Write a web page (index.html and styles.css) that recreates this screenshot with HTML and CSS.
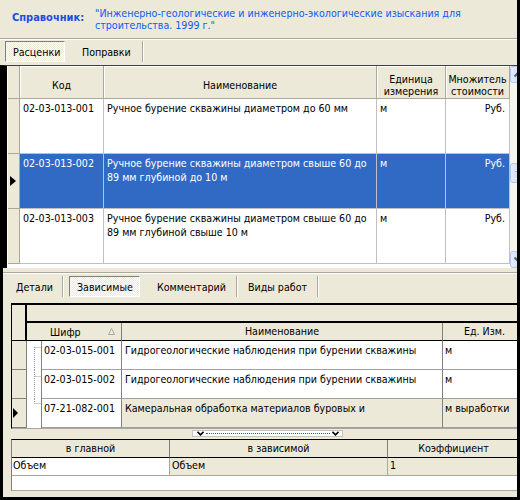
FILE: index.html
```html
<!DOCTYPE html>
<html>
<head>
<meta charset="utf-8">
<link rel="stylesheet" href="styles.css">
</head>
<body>
<div class="win">
  <div class="title">
    <div class="lbl">Справочник:</div>
    <div class="ttl">"Инженерно-геологические и инженерно-экологические изыскания для<br>строительства. 1999 г."</div>
  </div>
  <div class="tabs tabs-top">
    <div class="tab on t-rasc">Расценки</div>
    <div class="tab sep t-popr">Поправки</div>
  </div>
  <div class="g1wrap">
    <div class="g1">
      <div class="r1 hd">
        <div class="c ind"></div>
        <div class="c h"><span>Код</span></div>
        <div class="c h"><span>Наименование</span></div>
        <div class="c h"><span>Единица<br>измерения</span></div>
        <div class="c h"><span>Множитель<br>стоимости</span></div>
      </div>
      <div class="r1">
        <div class="c ind"></div>
        <div class="c">02-03-013-001</div>
        <div class="c">Ручное бурение скважины диаметром до 60 мм</div>
        <div class="c">м</div>
        <div class="c rt">Руб.</div>
      </div>
      <div class="r1 sel">
        <div class="c ind"><div class="arrow"></div></div>
        <div class="c">02-03-013-002</div>
        <div class="c">Ручное бурение скважины диаметром свыше 60 до<br>89 мм глубиной до 10 м</div>
        <div class="c">м</div>
        <div class="c rt">Руб.</div>
      </div>
      <div class="r1">
        <div class="c ind"></div>
        <div class="c">02-03-013-003</div>
        <div class="c">Ручное бурение скважины диаметром свыше 60 до<br>89 мм глубиной свыше 10 м</div>
        <div class="c">м</div>
        <div class="c rt">Руб.</div>
      </div>
      <div class="fill"></div>
    </div>
    <div class="vs">
      <div class="vsi">
        <div class="sb"><svg width="15" height="15" viewBox="0 0 15 15"><path d="M3.5 9.5 L7.5 5.5 L11.5 9.5" fill="none" stroke="#4D6185" stroke-width="2"/></svg></div>
        <div class="track"><div class="thumb"></div></div>
        <div class="sb"><svg width="15" height="15" viewBox="0 0 15 15"><path d="M3.5 5.5 L7.5 9.5 L11.5 5.5" fill="none" stroke="#4D6185" stroke-width="2"/></svg></div>
      </div>
    </div>
  </div>
  <div class="lower">
    <div class="etch"></div>
    <div class="tabs tabs-bot">
      <div class="tab sep t-det">Детали</div>
      <div class="tab on t-zav">Зависимые</div>
      <div class="tab sep t-kom">Комментарий</div>
      <div class="tab sep t-vid">Виды работ</div>
    </div>
    <div class="g2">
      <div class="band">
        <div class="ind"></div>
        <div class="gp"></div>
      </div>
      <div class="hd2">
        <div class="ind"></div>
        <div class="hs"><span>Шифр</span><svg class="sort" width="7" height="7" viewBox="0 0 7 7"><path d="M3.5 0.5 L6.5 6.5 H0.5 Z" fill="none" stroke="#A8A8A8"/></svg></div>
        <div class="hc">Наименование</div>
        <div class="hc">Ед. Изм.</div>
      </div>
      <div class="r2">
        <div class="ind"></div>
        <div class="tree"><svg width="14" height="29" viewBox="0 0 14 29"><path d="M7.5 6 V29 M7.5 6.5 H14" fill="none" stroke="#9A9A9A" stroke-dasharray="1 1"/></svg></div>
        <div class="d">02-03-015-001</div>
        <div class="d dn">Гидрогеологические наблюдения при бурении скважины</div>
        <div class="d de">м</div>
      </div>
      <div class="r2">
        <div class="ind"></div>
        <div class="tree"><svg width="14" height="29" viewBox="0 0 14 29"><path d="M7.5 0 V29 M7.5 6.5 H14" fill="none" stroke="#9A9A9A" stroke-dasharray="1 1"/></svg></div>
        <div class="d">02-03-015-002</div>
        <div class="d dn">Гидрогеологические наблюдения при бурении скважины</div>
        <div class="d de">м</div>
      </div>
      <div class="r2 sel2">
        <div class="ind"><div class="arrow a2"></div></div>
        <div class="tree"><svg width="14" height="29" viewBox="0 0 14 29"><path d="M7.5 0 V4 M7.5 4.5 H14" fill="none" stroke="#9A9A9A" stroke-dasharray="1 1"/></svg></div>
        <div class="d">07-21-082-001</div>
        <div class="d dn">Камеральная обработка материалов буровых и</div>
        <div class="d de">м выработки</div>
      </div>
    </div>
    <div class="split">
      <div class="sbar">
        <svg width="7" height="5" viewBox="0 0 7 5"><path d="M0.5 0.8 L3.5 3.8 L6.5 0.8" fill="none" stroke="#000" stroke-width="1.6"/></svg>
        <div class="dots"></div>
        <svg width="7" height="5" viewBox="0 0 7 5"><path d="M0.5 0.8 L3.5 3.8 L6.5 0.8" fill="none" stroke="#000" stroke-width="1.6"/></svg>
      </div>
    </div>
    <div class="g3">
      <div class="r3 hd3">
        <div>в главной</div>
        <div>в зависимой</div>
        <div>Коэффициент</div>
      </div>
      <div class="r3 dat">
        <div>Объем</div>
        <div>Объем</div>
        <div>1</div>
      </div>
      <div class="empty"></div>
    </div>
  </div>
</div>
</body>
</html>
```
FILE: styles.css
```css
* { box-sizing: border-box; }
html, body { margin: 0; padding: 0; }
body {
  width: 520px; height: 500px; overflow: hidden;
  font-family: "DejaVu Sans Condensed", "DejaVu Sans", sans-serif;
  font-size: 10.6px; color: #000; background: #ECE9D8;
}
.win {
  width: 520px; height: 500px; display: flex; flex-direction: column;
  background: #ECE9D8; border-right: 3px solid #000; border-bottom: 3px solid #000;
  overflow: hidden;
}
.title { flex: none; height: 39px; display: flex; border-bottom: 1px solid #ACA899; }
.lbl { flex: none; width: 83px; margin: 12px 0 0 12px; font-weight: bold; font-size: 11px; color: #1a4fe0; line-height: 12px; }
.ttl { padding-top: 7px; line-height: 12px; color: #0b5cf5; white-space: nowrap; }

.tabs { flex: none; display: flex; align-items: flex-start; }
.tabs-top { height: 23px; border-top: 1px solid #fff; padding: 1px 0 0 5px; }
.tab { flex: none; height: 21px; padding-top: 2px; line-height: 19px; white-space: nowrap; }
.tab.sep { border-right: 1px solid #fff; box-shadow: inset -1px 0 0 #ACA899; }
.tab.on {
  border: 1px solid; border-color: #808080 #fff #fff #808080;
  padding-top: 1px; line-height: 18px;
  background: repeating-conic-gradient(#fff 0% 25%, #ECE9D8 0% 50%) 0 0 / 2px 2px;
}
.t-rasc { width: 60px; padding-left: 7px; }
.t-popr { margin-left: 5px; width: 74px; padding-left: 12px; }

.g1wrap { flex: none; margin-top: 3px; height: 203px; display: flex; border-left: 7px solid #000; border-top: 1px solid #404040; }
.g1 { flex: none; width: 503px; border-left: 1px solid #fff; display: flex; flex-direction: column; background: #fff; }
.r1 { flex: none; display: grid; grid-template-columns: 12px 84px 273px 69px 64px; height: 55px; }
.r1.hd { height: 33px; }
.g1 .c {
  border-right: 1px solid #C0C0C0; border-bottom: 1px solid #C0C0C0;
  padding: 2px 3px 0; line-height: 14px; white-space: nowrap; overflow: hidden; background: #fff;
}
.g1 .ind { background: #ECE9D8; border-right-color: #ACA899; border-bottom-color: #ACA899; padding: 0 0 0 2px; display: flex; align-items: center; }
.g1 .h {
  background: #ECE9D8; border-right-color: #ACA899; border-bottom-color: #ACA899;
  box-shadow: inset 1px 1px 0 #fff; display: flex; align-items: center; justify-content: center;
  text-align: center; padding: 5px 0 0; line-height: 12px;
}
.r1.sel .c:not(.ind) { background: #316AC5; color: #fff; }
.g1 .rt { text-align: right; padding-right: 4px; }
.fill { flex: 1; background: #fff; }
.arrow { width: 0; height: 0; border-left: 6px solid #000; border-top: 5px solid transparent; border-bottom: 5px solid transparent; }
.arrow.a2 { border-left-width: 5px; }

.vs { flex: none; width: 7px; overflow: hidden; background: #F5F4EE; }
.vsi { width: 17px; height: 100%; display: flex; flex-direction: column; }
.sb {
  flex: none; height: 17px; border: 1px solid #B2C5F1; border-radius: 3px;
  background: linear-gradient(90deg, #E3EBFE, #C2D3FB); display: flex; align-items: center; justify-content: center;
}
.track { flex: 1; }
.thumb {
  margin-top: 80px; height: 20px; border: 1px solid #B2C5F1; border-radius: 3px;
  background: repeating-linear-gradient(180deg, transparent 0 6px, #EEF4FE 6px 7px, #8CB0F8 7px 8px) 4px 0 / 9px 15px no-repeat, linear-gradient(90deg, #E3EBFE, #C2D3FB);
}

.lower { flex: 1; display: flex; flex-direction: column; border-left: 3px solid #000; padding-top: 4px; }
.etch { flex: none; height: 2px; border-top: 1px solid #ACA899; border-bottom: 1px solid #fff; }
.tabs-bot { height: 29px; padding-top: 2px; }
.t-det { width: 61px; padding-left: 13px; }
.t-zav { margin-left: 5px; width: 71px; padding-left: 7px; }
.t-kom { margin-left: 4px; width: 94px; padding-left: 13px; }
.t-vid { width: 81px; padding-left: 10px; }

.g2 {
  flex: none; margin-left: 8px; border-top: 2px solid #000; border-left: 1px solid #000;
  border-bottom: 1px solid #ACA899; overflow: hidden; display: flex; flex-direction: column; background: #fff;
}
.band { flex: none; display: grid; grid-template-columns: 15px 1fr; height: 18px; }
.band .ind { background: #ECE9D8; border-right: 2px solid #000; }
.band .gp { background: #ECE9D8; border-bottom: 2px solid #000; }
.hd2 { flex: none; display: grid; grid-template-columns: 15px 95px 321px 84px; height: 18px; }
.hd2 > div { background: #ECE9D8; border-bottom: 1px solid #000; border-right: 1px solid #808080; line-height: 16px; white-space: nowrap; }
.hd2 .ind { border-right: 2px solid #000; }
.hs { display: flex; align-items: center; padding: 0 6px 0 23px; }
.hs .sort { margin-left: auto; }
.hc { text-align: center; }
.r2 { flex: none; display: grid; grid-template-columns: 15px 15px 80px 321px 84px; height: 29px; }
.r2 .ind { background: #ECE9D8; border-right: 1px solid #808080; border-bottom: 1px solid #808080; display: flex; align-items: center; padding-left: 1px; }
.r2 .tree { background: #fff; border-right: 1px solid #808080; }
.r2 .tree svg { display: block; }
.r2 .d {
  background: #fff; border-right: 1px solid #808080; border-bottom: 1px solid #A0A0A0;
  padding: 2px 0 0 2px; line-height: 14px; white-space: nowrap; overflow: hidden;
}
.r2 .dn { padding-left: 3px; }
.r2 .de { border-right: none; }
.sel2 .dn, .sel2 .de { background: #ECE9D8; }

.split { flex: none; height: 10px; padding: 1px 0 0 189px; }
.sbar {
  width: 151px; height: 7px; display: flex; align-items: center; gap: 2px; padding: 0 3px 0 4px;
  background: #fff; border: 1px solid #C4C4C4;
}
.sbar svg { flex: none; display: block; }
.dots { flex: 1; height: 0; border-top: 1px dotted #2C5BDE; }

.g3 {
  flex: none; margin-left: 8px; border-top: 1px solid #000; border-left: 1px solid #808080;
  border-bottom: 1px solid #ACA899; overflow: hidden; background: #fff;
}
.r3 { display: grid; grid-template-columns: 158px 218px 132px; height: 18px; }
.hd3 > div { background: #ECE9D8; border-bottom: 1px solid #000; border-right: 1px solid #808080; text-align: center; line-height: 17px; white-space: nowrap; }
.dat > div { background: #ECE9D8; border-bottom: 1px solid #ACA899; border-right: 1px solid #ACA899; line-height: 15px; padding-left: 2px; white-space: nowrap; }
.dat > div:first-child { background: #fff; padding-left: 1px; }
.empty { height: 14px; background: #fff; }
```
